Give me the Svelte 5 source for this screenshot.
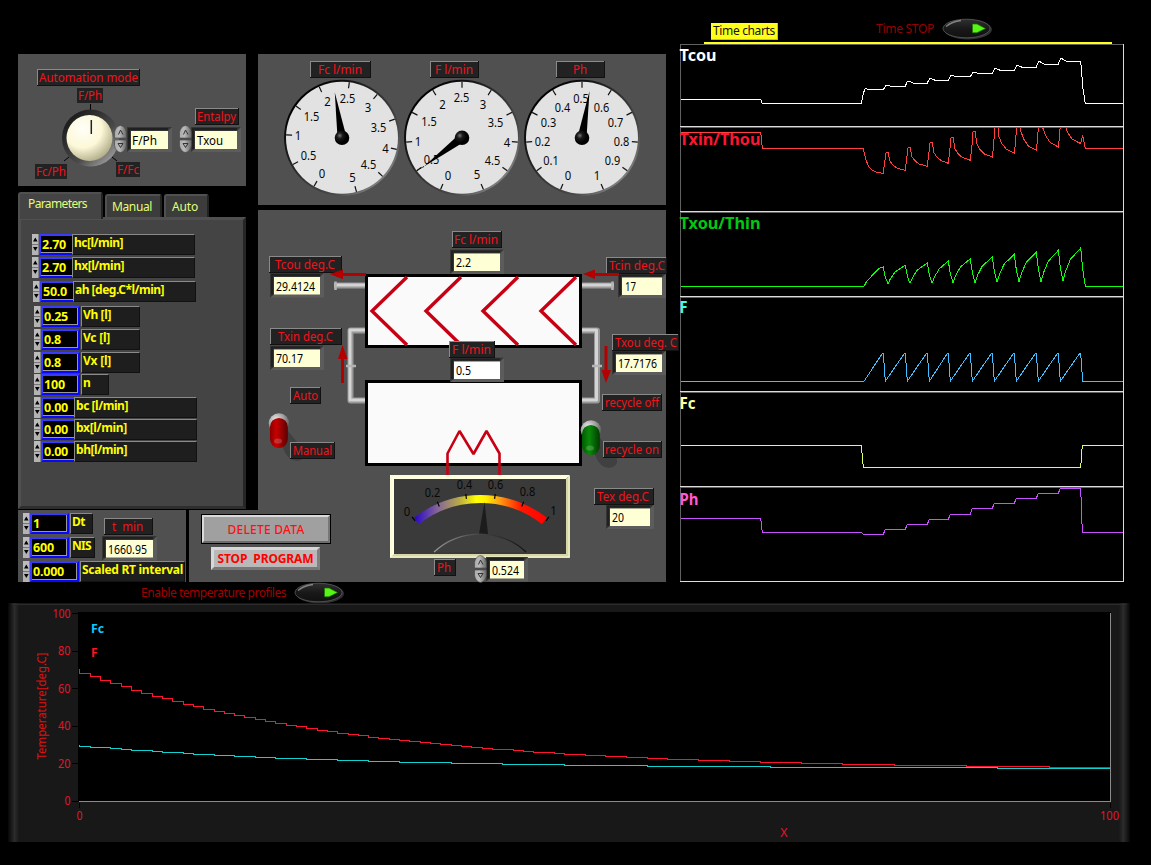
<script>
  function fit(node, width) {
    const natural = node.getBoundingClientRect().width;
    node.style.letterSpacing = `${(width - natural) / node.textContent.length}px`;
  }

  const params = [
    { v: '2.70', vw: 24, l: 'hc[l/min]', lw: 49, x: 0, box: 33, w: 123, gap: 0, join: true },
    { v: '2.70', vw: 24, l: 'hx[l/min]', lw: 50, x: 0, box: 33, w: 123, gap: 2, join: true },
    { v: '50.0', vw: 24, l: 'ah [deg.C*l/min]', lw: 89, x: 1, box: 33, w: 123, gap: 3, join: true },
    { v: '0.25', vw: 24, l: 'Vh [l]', lw: 28, x: 2, box: 39, w: 59, gap: 4 },
    { v: '0.8', vw: 17, l: 'Vc [l]', lw: 27, x: 2, box: 39, w: 59, gap: 2 },
    { v: '0.8', vw: 17, l: 'Vx [l]', lw: 28, x: 2, box: 39, w: 59, gap: 2 },
    { v: '100', vw: 21, l: 'n', lw: 7, x: 2, box: 39, w: 28, gap: 1 },
    { v: '0.00', vw: 24, l: 'bc [l/min]', lw: 52, x: 2, box: 33, w: 123, gap: 2, join: true },
    { v: '0.00', vw: 24, l: 'bx[l/min]', lw: 51, x: 2, box: 33, w: 123, gap: 1, join: true },
    { v: '0.00', vw: 24, l: 'bh[l/min]', lw: 51, x: 2, box: 33, w: 123, gap: 1, join: true }
  ];
  const settings = [
    { v: '1', vw: 7, l: 'Dt', lw: 13, box: 39, w: 23, x: 0, gap: 0 },
    { v: '600', vw: 21, l: 'NIS', lw: 19, box: 39, w: 25, x: 0, gap: 3 },
    { v: '0.000', vw: 31, l: 'Scaled RT interval', lw: 101, box: 49, w: 105, x: 0, gap: 3 }
  ];

  const scale5 = ['0', '0.5', '1', '1.5', '2', '2.5', '3', '3.5', '4', '4.5', '5'];
  const scale1 = ['0', '0.1', '0.2', '0.3', '0.4', '0.5', '0.6', '0.7', '0.8', '0.9', '1'];
  const gauges = [
    { cx: 342, start: 30, tip: [334.8, 92.5], names: scale5,
      at: [[322,173],[308.5,155.5],[298,135.5],[311.5,116.5],[327.5,101.5],[347.5,98.5],[368,107.5],[378.5,127],[385.5,148],[368.5,164],[352.5,177]] },
    { cx: 462, start: 22.5, tip: [424, 166.5], names: scale5,
      at: [[448,175],[431.5,159.5],[418,141.5],[429,121.5],[442.5,104.5],[461.5,97.5],[483,104.5],[495.5,122],[507,142],[492.5,160],[477,174.5]] },
    { cx: 582, start: 22.5, tip: [589.5, 91], names: scale1,
      at: [[568,175],[551,160],[542.5,141],[548.5,122],[562.5,107],[581,98],[601.5,107],[615.5,122],[621.5,141],[612.5,160],[597,175]] }
  ];
  const gy = 137.8;
  const ticks = (g) =>
    g.names.map((_, i) => {
      const a = ((g.start + i * 31.5) * Math.PI) / 180;
      const s = Math.sin(a), c = Math.cos(a);
      return [g.cx - s * 56, gy + c * 56, g.cx - s * 50, gy + c * 50];
    });
  const needle = (g, h = 4.5) => {
    const dx = g.tip[0] - g.cx, dy = g.tip[1] - gy, d = Math.hypot(dx, dy);
    const nx = (-dy / d) * h, ny = (dx / d) * h;
    return `${g.tip[0]},${g.tip[1]} ${g.cx + nx},${gy + ny} ${g.cx - nx},${gy - ny}`;
  };

  const mR = 104, mCx = 480.5, mCy = 603;
  const meterTicks = [0, 1, 2, 3, 4, 5].map((i) => {
    const a = ((-38.5 + i * 15.4) * Math.PI) / 180;
    const s = Math.sin(a), c = Math.cos(a);
    return [mCx + s * (mR + 6), mCy - c * (mR + 6), mCx + s * (mR + 1), mCy - c * (mR + 1)];
  });

  // Strip-chart traces: samples are in thirds of a pixel from the chart origin.
  const J = [625, 691, 757, 820, 886, 952, 1018, 1084, 1150, 1217];
  const path = (pts, oy) =>
    'M' + pts.map(([x, y]) => `${(675 + x / 3).toFixed(1)} ${(oy + y / 3).toFixed(1)}`).join('L');

  const lvl = [239, 229, 219, 211, 200, 190, 181, 172, 163, 154];
  const pk = [235, 226, 213, 205, 196, 187, 175, 166, 154, 145];
  const tcou = [[18,268],[257,268],[262,280],[559,280],[565,250],[571,235],[580,lvl[0]]];
  for (let i = 0; i < 9; i++)
    tcou.push([J[i], lvl[i]], [J[i] + 5, pk[i + 1] + 4], [J[i] + 9, pk[i + 1]], [J[i] + 24, lvl[i + 1]]);
  tcou.push([1217,154],[1224,238],[1231,280],[1344,280]);

  const low = [490, 481, 469, 460, 451, 441, 430, 421, 411, 401];
  const top = [0, 427, 411, 396, 381, 364, 330, 310, 300, 290];
  const txin = [[18,367],[257,367],[262,415],[564,415],[573,450],[581,470],[592,481],[605,487],[625,490]];
  for (let i = 0; i < 9; i++) {
    const p = top[i + 1], b = low[i + 1], d = b - p;
    txin.push([J[i], low[i]], [J[i] + 4, low[i] - 35], [J[i] + 8, p + 2], [J[i] + 14, p],
      [J[i] + 20, p + d * 0.5], [J[i] + 28, p + d * 0.7], [J[i] + 42, p + d * 0.88], [J[i + 1], b]);
  }
  txin.push([1217,401],[1223,376],[1231,415],[1344,415]);

  const gp = [771, 766, 759, 753, 746, 741, 733, 726, 721, 714];
  const gt = [821, 820, 820, 818, 818, 815, 815, 815, 812];
  const txou = [[18,829],[567,829],[575,814],[612,775],[625,771]];
  for (let i = 0; i < 9; i++) {
    const d = gt[i] - gp[i + 1];
    txou.push([J[i], gp[i]], [J[i] + 6, (gp[i] + gt[i]) / 2 + 5], [J[i] + 14, gt[i]],
      [J[i] + 22, gt[i] - d * 0.3], [J[i] + 36, gt[i] - d * 0.65], [J[i + 1], gp[i + 1]]);
  }
  txou.push([1217,714],[1223,778],[1231,829],[1344,829]);

  const flow = [[18,274],[567,274]];
  J.forEach((x) => flow.push([x - 4, 192], [x, 190], [x + 6, 274]));
  flow.push([1344, 274]);
  const fc = [[18,466],[559,466],[565,532],[1217,532],[1222,466],[1344,466]];
  const phl = [733, 718, 703, 688, 673, 655, 640, 625, 610, 595];
  const ph = [[18,685],[257,685],[262,727],[560,727],[565,733]];
  for (let i = 0; i < 9; i++) ph.push([J[i], phl[i]], [J[i] + 6, phl[i + 1]]);
  ph.push([1217,595],[1222,727],[1344,727]);

  const traces = [
    { d: path(tcou, 10), c: '#ffffff' },
    { d: path(txin, 10), c: '#ff4040' },
    { d: path(txou, 10), c: '#10ff10' },
    { d: path(flow, 290), c: '#40c0ff' },
    { d: path(fc, 290), c: '#dcff60' },
    { d: path(ph, 290), c: '#c850ff' }
  ];
  const names = [
    ['Tcou', 61, 37, '#ffffff'], ['Txin/Thou', 145, 81, '#ff1530'], ['Txou/Thin', 229, 81, '#00c814'],
    ['F', 313, 8, '#3cffee'], ['Fc', 409, 16, '#ffffa0'], ['Ph', 505, 19, '#ff5ad0']
  ];

  const profile = (base, amp, y0) => {
    let d = `M79.5 ${y0}`;
    for (let n = 0; n < 100; n++) {
      const y = Math.round(base - amp * Math.exp(-0.039 * n)) + 0.5;
      d += `V${y}H${Math.min(1110, Math.round(79.5 + (n + 1) * 10.31) + 0.5)}`;
    }
    return d;
  };
  const hot = profile(769, 96.5, 669);
  const cold = profile(768.2, 22.4, 745);
</script>

{#snippet txt(x, y, s, w, c = '#f0141e')}
  <text {x} {y} fill={c} textLength={w} lengthAdjust="spacingAndGlyphs">{s}</text>
{/snippet}

{#snippet tag(x, y, w, h, s, tx, tw)}
  <rect {x} {y} width={w} height={h} fill="#111" />
  <rect {x} {y} width={w - 1} height={h - 1} fill="#8a8a8a" />
  <rect x={x + 1} y={y + 1} width={w - 2} height={h - 2} fill="#222" />
  {@render txt(tx, y + 13, s, tw)}
{/snippet}

{#snippet field(x, y, w, h, s, tx, tw, bg = '#ffffd6')}
  <rect x={x - 4} y={y - 4} width={w + 8} height={h + 7} fill="#5c5c5c" />
  <path d="M{x - 4} {y + h + 3}V{y - 4}H{x + w + 4}L{x + w} {y}H{x}V{y + h}Z" fill="#353535" />
  <path d="M{x - 2} {y + h}V{y - 2}H{x + w}" fill="none" stroke="#202020" stroke-width="2" />
  <rect {x} {y} width={w} height={h} fill={bg} />
  {@render txt(tx, Math.round(y + 13.5), s, tw, '#000')}
{/snippet}

{#snippet spin(x, y)}
  <path d="M{x} {y + 12.5}V{y + 7}Q{x + 1} {y + 1} {x + 6} {y}Q{x + 11} {y + 1} {x + 12} {y + 7}V{y + 12.5}Z" fill="url(#nub)" stroke="#444" stroke-width=".6" />
  <path d="M{x} {y + 14.5}V{y + 20}Q{x + 1} {y + 26} {x + 6} {y + 27}Q{x + 11} {y + 26} {x + 12} {y + 20}V{y + 14.5}Z" fill="url(#nub)" stroke="#444" stroke-width=".6" />
  <path d="M{x + 4} {y + 9}L{x + 6} {y + 4.5}L{x + 8.5} {y + 9}" fill="none" stroke="#333" />
  <path d="M{x + 3.5} {y + 18}H{x + 8.5}L{x + 6} {y + 22}Z" fill="none" stroke="#333" />
{/snippet}

{#snippet lamp()}
  <svg class="lamp" width="52" height="22" viewBox="0 0 52 22">
    <ellipse cx="26" cy="11.5" rx="24" ry="10" fill="#2e2e2e" />
    <ellipse cx="24.5" cy="10.5" rx="23.5" ry="9.3" fill="url(#pill)" stroke="#5c5c5c" stroke-width=".8" />
    <path d="M4 8.5Q10 3.5 19 2.5" fill="none" stroke="#aaa" stroke-width="1.4" opacity=".7" />
    <path d="M30.5 6H35L43.5 10.5L35 14.8H30.5Z" fill="#55f516" stroke="#247008" stroke-width=".7" />
  </svg>
{/snippet}

{#snippet toggle(x, y, fill)}
  <path d="M{x + 5} {y + 4}L{x + 26} {y + 30}Q{x + 27} {y + 38} {x + 18} {y + 39}Q{x + 9} {y + 39} {x + 4} {y + 26}Z" fill="#3b3b3b" opacity=".75" />
  <circle cx={x} cy={y + 1.5} r="10.3" fill="url(#chrome)" />
  <rect x={x - 9} y={y - 4} width="17.8" height="30" rx="8.9" {fill} />
  <ellipse cx={x - 1} cy={y + 19} rx="4" ry="2.6" fill="#fff" opacity=".18" />
{/snippet}

{#snippet numeric(p)}
  <div class="row" style:margin-top="{p.gap}px" style:margin-left="{p.x}px">
    <svg class="inc" width="7" height="21" viewBox="0 0 7 21">
      <rect width="7" height="21" fill="#777" /><rect width="6.2" height="10" fill="#bbb" /><rect y="11" width="6.2" height="10" fill="#b3b3b3" />
      <path d="M1 7.5L3.3 3.5L5.6 7.5Z M1 13L3.3 17L5.6 13Z" fill="#000" />
    </svg>
    <div class="num" class:join={p.join} style:width="{p.box}px"><span use:fit={p.vw}>{p.v}</span></div>
    <div class="cap" class:join={p.join} style:width="{p.w}px"><span use:fit={p.lw}>{p.l}</span></div>
  </div>
{/snippet}

<div class="page">
  <div class="top">
    <div class="bench">
      <div class="left">
        <svg class="panel" width="228" height="132" viewBox="18 54 228 132">
          <defs>
            <linearGradient id="nub" x1="0" x2="1"><stop offset="0" stop-color="#aaa" /><stop offset=".4" stop-color="#bbb" /><stop offset="1" stop-color="#666" /></linearGradient>
            <linearGradient id="ring" x1="0" y1="0" x2="1" y2="1"><stop offset=".1" stop-color="#181818" /><stop offset=".6" stop-color="#4a4a4a" /><stop offset=".87" stop-color="#999" /><stop offset="1" stop-color="#555" /></linearGradient>
            <radialGradient id="cream" cx=".35" cy=".3" r=".75"><stop offset="0" stop-color="#fffff8" /><stop offset=".55" stop-color="#fcf8d8" /><stop offset="1" stop-color="#b0ac88" /></radialGradient>
            <linearGradient id="pill" x1="0" y1="0" x2="0" y2="1"><stop offset="0" stop-color="#303030" /><stop offset=".5" stop-color="#191919" /><stop offset="1" stop-color="#101010" /></linearGradient>
          </defs>
          {@render tag(37, 69, 103, 17, 'Automation mode', 39, 99)}
          <rect x="77" y="88" width="26" height="15" fill="#222" />{@render txt(78, 100, 'F/Ph', 24)}
          <rect x="35" y="164" width="32" height="15" fill="#222" />{@render txt(36, 176, 'Fc/Ph', 30)}
          <rect x="116" y="162" width="24" height="15" fill="#222" />{@render txt(117, 174, 'F/Fc', 22)}
          <path d="M90.5 104V110M69 157L64 161M112 157L117 161" stroke="#000" fill="none" />
          <circle cx="90.5" cy="138" r="28.5" fill="url(#ring)" />
          <circle cx="89.5" cy="138" r="23" fill="url(#cream)" />
          <path d="M91.3 120V134" stroke="#222" stroke-width="1.5" />
          {@render field(131, 131, 37, 18, 'F/Ph', 132, 25)}
          {@render spin(114.5, 125.5)}
          {@render tag(195, 108, 44, 17, 'Entalpy', 197, 39)}
          {@render field(195, 131, 42, 18, 'Txou', 197, 26)}
          {@render spin(179.5, 125.5)}
        </svg>

        <div class="tabs">
          <div class="tabrow">
            <div class="tab on"><span use:fit={59}>Parameters</span></div>
            <div class="tab manual"><span use:fit={40}>Manual</span></div>
            <div class="tab auto"><span use:fit={26}>Auto</span></div>
          </div>
          <div class="sheet">
            {#each params as p}{@render numeric(p)}{/each}
          </div>
        </div>
      </div>

      <div class="right">
        <svg class="panel" width="408" height="151" viewBox="258 54 408 151">
          <defs>
            <linearGradient id="bezel" x1="0" y1="0" x2="1" y2="1"><stop offset=".15" stop-color="#000" /><stop offset=".5" stop-color="#333" /><stop offset=".72" stop-color="#4a4a4a" /><stop offset=".88" stop-color="#8a8a8a" /></linearGradient>
            <radialGradient id="hub" cx=".35" cy=".35"><stop offset="0" stop-color="#777" /><stop offset=".4" stop-color="#1a1a1a" /><stop offset="1" stop-color="#000" /></radialGradient>
          </defs>
          {@render tag(310, 61, 61, 17, 'Fc l/min', 318, 44)}
          {@render tag(430, 61, 49, 17, 'F l/min', 435, 38)}
          {@render tag(556, 61, 49, 17, 'Ph', 573, 14)}
          {#each gauges as g}
            <circle cx={g.cx} cy={gy} r="58" fill="url(#bezel)" />
            <circle cx={g.cx} cy={gy} r="56" fill="#e2e2e2" />
            {#each ticks(g) as t}<line x1={t[0]} y1={t[1]} x2={t[2]} y2={t[3]} stroke="#111" stroke-width="1.2" />{/each}
            {#each g.names as n, i}
              <text x={g.at[i][0]} y={g.at[i][1] + 4.5} text-anchor="middle" class="dial" textLength={n.length > 1 ? 15.5 : 6.5} lengthAdjust="spacingAndGlyphs">{n}</text>
            {/each}
            <polygon points={needle(g)} fill="#000" />
            <circle cx={g.cx} cy={gy} r="7.3" fill="url(#hub)" />
          {/each}
          <path d="M424 166.5L416 171" stroke="#111" stroke-dasharray="2 1" />
        </svg>

        <svg class="panel process" width="408" height="372" viewBox="258 210 408 372">
          <defs>
            <linearGradient id="heat" gradientUnits="userSpaceOnUse" x1="413" x2="548" y1="0" y2="0">
              <stop offset="0" stop-color="#2400c8" /><stop offset=".18" stop-color="#84649a" /><stop offset=".34" stop-color="#b8a848" /><stop offset=".47" stop-color="#ffff00" /><stop offset=".54" stop-color="#fff000" /><stop offset=".64" stop-color="#ffa010" /><stop offset=".8" stop-color="#ff1800" /><stop offset="1" stop-color="#ff0000" />
            </linearGradient>
            <linearGradient id="rim" x1="0" x2="1"><stop offset="0" stop-color="#999" /><stop offset=".5" stop-color="#444" /><stop offset="1" stop-color="#111" /></linearGradient>
            <linearGradient id="red" x1="0" x2="1"><stop offset="0" stop-color="#8c0000" /><stop offset=".35" stop-color="#c80000" /><stop offset="1" stop-color="#5a0000" /></linearGradient>
            <linearGradient id="green" x1="0" x2="1"><stop offset="0" stop-color="#005c00" /><stop offset=".4" stop-color="#0a8a0a" /><stop offset="1" stop-color="#003c00" /></linearGradient>
            <radialGradient id="chrome" cx=".35" cy=".3" r=".7"><stop offset="0" stop-color="#e8e8e8" /><stop offset=".6" stop-color="#999" /><stop offset="1" stop-color="#555" /></radialGradient>
          </defs>

          <g fill="none" stroke-linejoin="round">
            <path d="M334 285.5H366M582 285.5H614M366 330.5H350.5V400.5H366M582 330.5H597V400.5H582" stroke="#989898" stroke-width="6" />
            <path d="M334 285H366M582 285H614M366 330H350V400H366M582 330H596.5V400H582" stroke="#d4d4d4" stroke-width="3" />
            <path d="M335.5 281.5V290M612.5 281.5V290M346 366H356M592 366H602" stroke="#b4b4b4" stroke-width="2.5" />
          </g>

          <rect x="366.5" y="275.5" width="214" height="71" fill="#fafafa" stroke="#000" stroke-width="3" />
          <rect x="366.5" y="381.5" width="214" height="83" fill="#fafafa" stroke="#000" stroke-width="3" />
          <path d="M407 277L372 311L407 345M461 277L426 311L461 345M518 277L483 311L518 345M576 277L541 311L576 345" fill="none" stroke="#c80014" stroke-width="3.4" />
          <path d="M447.5 475V453.5L459.5 431L473.5 454L486.5 431L499.5 453.5V475" fill="none" stroke="#c80014" stroke-width="2.6" stroke-linejoin="bevel" />

          <g fill="#b40000">
            <path d="M330 274L343 269.5V273H366V276H343V279Z" />
            <path d="M583 274L595 269.5V273H619V276H595V279Z" />
            <path d="M342.5 345L338 359H341V383H344V359H347.5Z" />
            <path d="M606 383L601.5 370H604.5V346H607.5V370H611Z" />
          </g>

          {@render tag(452, 231, 50, 17, 'Fc l/min', 454, 44)}
          {@render field(454, 253.5, 46, 17.5, '2.2', 456, 15)}
          {@render field(274, 277, 46, 17.5, '29.4124', 276, 39)}
          {@render tag(269, 256, 73, 17, 'Tcou deg.C', 275, 60)}
          {@render field(274, 349.5, 46, 17.5, '70.17', 276, 27)}
          {@render tag(270, 328, 72, 17, 'Txin deg.C', 278, 55)}
          {@render field(454, 361.5, 46, 17.5, '0.5', 456, 15, '#ffffff')}
          {@render tag(449, 341, 46, 17, 'F l/min', 452, 39)}
          {@render field(622, 277.5, 40, 17.5, '17', 625, 11)}
          {@render tag(606, 257, 61, 17, 'Tcin deg.C', 609, 56)}
          <path d="M330 274L343 269.5V279ZM595 273H619V276H595Z" fill="#b40000" />
          {@render field(616, 354.5, 46, 17.5, '17.7176', 618, 39)}
          {@render tag(612, 334, 67, 17, 'Txou deg. C', 615, 62)}

          {@render toggle(279, 422, 'url(#red)')}
          {@render tag(290, 387, 31, 17, 'Auto', 293, 25)}
          {@render tag(290, 442, 45, 17, 'Manual', 293, 39)}
          {@render toggle(591, 429, 'url(#green)')}
          {@render tag(602, 394, 60, 17, 'recycle off', 605, 54)}
          {@render tag(603, 441, 59, 17, 'recycle on', 605, 54)}

          {@render field(610, 508.5, 40, 17.5, '20', 612, 12)}
          {@render tag(594, 488, 60, 17, 'Tex deg.C', 597, 52)}

          <path d="M390 475H570L566 479V554L570 558H390Z" fill="#ffffe4" />
          <path d="M570 475V558H390L394 554H566V479Z" fill="#d6d6a6" />
          <path d="M391 476H569V557H391Z" fill="none" stroke="#fafad4" />
          <rect x="394" y="479" width="172" height="75" fill="#3a3a3a" />
          <path d="M416.5 521A104 104 0 0 1 544.5 521" fill="none" stroke="url(#heat)" stroke-width="8" />
          {#each meterTicks as t}<line x1={t[0]} y1={t[1]} x2={t[2]} y2={t[3]} stroke="#000" stroke-width="1.2" />{/each}
          {#each [['0', 407, 511], ['0.2', 432.5, 492], ['0.4', 464.5, 484], ['0.6', 495.5, 484], ['0.8', 527.5, 491.5], ['1', 553.5, 510.5]] as m}
            <text x={m[1]} y={m[2] + 4.5} text-anchor="middle" class="dial" textLength={m[0].length > 1 ? 15.5 : 6.5} lengthAdjust="spacingAndGlyphs">{m[0]}</text>
          {/each}
          <path d="M484.5 502L479 534H488Z" fill="#1c1c1c" />
          <path d="M434 552A68 68 0 0 1 526 552" fill="#3f3f3f" stroke="url(#rim)" stroke-width="1.2" />

          {@render tag(434, 559, 22, 17, 'Ph', 437, 14)}
          {@render field(490, 561, 34, 17.5, '0.524', 492, 27)}
          {@render spin(474.5, 555.5)}
        </svg>
      </div>

      <div class="settings">
        <div>
          {#each settings as p}{@render numeric(p)}{/each}
        </div>
        <svg class="clock" width="60" height="46" viewBox="100 516 60 46">
          {@render tag(104, 518, 49, 17, 't  min', 112, 31)}
          {@render field(106, 540, 47, 17.5, '1660.95', 108, 39)}
        </svg>
      </div>

      <div class="actions">
        <button class="delete"><span use:fit={77}>DELETE DATA</span></button>
        <button class="stop"><span use:fit={96}>STOP&nbsp; PROGRAM</span></button>
      </div>
    </div>

    <div class="charts">
      <div class="chead">
        <div class="ctab"><span use:fit={62}>Time charts</span></div>
        <div class="tstop"><span use:fit={58}>Time STOP</span>{@render lamp()}</div>
      </div>
      <svg class="strip" width="444" height="540" viewBox="680 42 444 540">
        <path d="M704 42H1112V44H704Z" fill="#ffff20" />
        <g shape-rendering="crispEdges">
          <path d="M680.5 581V44.5H1123M680 127.5H1123M680 212.5H1123M680 297.5H1123M680 392.5H1123M680 487.5H1123" fill="none" stroke="#606060" />
          <path d="M1123.5 44V581.5H680M680 126.5H1123M680 211.5H1123M680 296.5H1123M680 391.5H1123M680 486.5H1123" fill="none" stroke="#dcdcdc" />
        </g>
        <clipPath id="lane"><rect x="681" y="128" width="442" height="83" /></clipPath>
        {#each traces as t, i}
          <path d={t.d} fill="none" stroke={t.c} stroke-width="1" shape-rendering="crispEdges" clip-path={i === 1 ? 'url(#lane)' : undefined} />
        {/each}
        {#each names as n}
          <text x="679.5" y={n[1]} class="lane" fill={n[3]} textLength={n[2]} lengthAdjust="spacingAndGlyphs">{n[0]}</text>
        {/each}
      </svg>
    </div>
  </div>

  <div class="enable"><span use:fit={145}>Enable temperature profiles</span>{@render lamp()}</div>

  <svg class="graph" width="1122" height="239" viewBox="8 603 1122 239">
    <defs>
      <linearGradient id="edge"><stop offset="0" stop-color="#060606" /><stop offset=".6" stop-color="#2c2c2c" /><stop offset="1" stop-color="#181818" /></linearGradient>
    </defs>
    <rect x="8" y="603" width="1122" height="239" fill="#181818" />
    <rect x="8" y="603" width="11" height="239" fill="url(#edge)" />
    <rect x="1119" y="603" width="11" height="239" fill="url(#edge)" transform="rotate(180 1124.5 722.5)" />
    <path d="M12 604.5H1127" stroke="#2c2c2c" />
    <rect x="78" y="612" width="1033" height="190" fill="#000" />
    <path d="M79 801.5H1110.5V613" fill="none" stroke="#8a8a8a" shape-rendering="crispEdges" />
    {#each [100, 80, 60, 40, 20, 0] as v, i}
      <path d="M72 {Math.round(613 + i * 37.5) + 0.5}H78" stroke="#000" />
      <text x="70.5" y={618 + i * 37.4} text-anchor="end" class="axis" textLength={v === 100 ? 18 : v === 0 ? 6 : 12.5} lengthAdjust="spacingAndGlyphs">{v}</text>
    {/each}
    <path d="M79.5 803V808M1110.5 803V808" stroke="#000" />
    <text x="79.5" y="820" text-anchor="middle" class="axis" textLength="6" lengthAdjust="spacingAndGlyphs">0</text>
    <text x="1109.5" y="820" text-anchor="middle" class="axis" textLength="19" lengthAdjust="spacingAndGlyphs">100</text>
    <text x="784" y="837" text-anchor="middle" class="axis">X</text>
    <text transform="translate(45.5 706) rotate(-90)" text-anchor="middle" fill="#e01010" textLength="107" lengthAdjust="spacingAndGlyphs">Temperature[deg.C]</text>
    <text x="91" y="633" class="key" fill="#10c8ff" textLength="13" lengthAdjust="spacingAndGlyphs">Fc</text>
    <text x="91" y="657" class="key" fill="#ff1420">F</text>
    <path d={hot} fill="none" stroke="#ff1430" shape-rendering="crispEdges" />
    <path d={cold} fill="none" stroke="#10d0d0" shape-rendering="crispEdges" />
  </svg>
</div>

<style>
  :global(body) { background: #000; overflow: hidden; }
  .page { width: 1151px; height: 865px; background: #000; overflow: hidden; font: 12px/16px 'Noto Sans', 'Open Sans', sans-serif; color: #e8141e; }
  svg { display: block; flex: none; }
  text { font: 12.4px 'Noto Sans', 'Open Sans', sans-serif; white-space: pre; }
  span { display: inline-block; white-space: pre; }
  .top { display: flex; height: 582px; }
  .bench { display: grid; grid-template-columns: 168px 3px 69px 408px; grid-template-rows: 456px 72px; margin: 54px 0 0 18px; }
  .panel { background: #505050; }
  .left { grid-column: 1 / 4; grid-row: 1; display: flex; flex-direction: column; gap: 6px; }
  .right { grid-column: 4; grid-row: 1 / 3; display: flex; flex-direction: column; gap: 5px; }
  .process { overflow: visible; position: relative; }
  .dial { fill: #080808; }

  .tabs { width: 228px; height: 317px; display: flex; flex-direction: column; }
  .tabrow { display: flex; align-items: flex-end; height: 25px; gap: 2px; }
  .tab { box-sizing: border-box; height: 23px; background: #3c3c3c; color: #e0ff78; border-top: 2px solid #505050; border-left: 2px solid #505050; border-right: 2px solid #222; border-radius: 3px 3px 0 0; }
  .tab.on { width: 85px; height: 27px; margin-bottom: -2px; background: #444; padding: 2px 0 0 8px; z-index: 1; }
  .tab.manual { width: 57px; padding: 3px 0 0 5px; }
  .tab.auto { width: 45px; padding: 3px 0 0 6px; }
  .sheet { flex: 1; box-sizing: border-box; background: #444; border: 3px solid; border-color: #505050 #262626 #2e2e2e #505050; padding: 14px 0 0 11px; }
  .row { display: flex; height: 21px; font-weight: 700; color: #ffff00; }
  .num, .cap { box-sizing: border-box; height: 21px; white-space: nowrap; flex: none; }
  .num { background: #000; border: 2px solid #0808ff; border-top-color: #3a3aff; border-left-color: #3a3aff; padding: 0 0 0 1px; font-size: 12.5px; line-height: 17px; box-shadow: inset -1px -1px #999; margin-right: 1px; }
  .num span { line-height: 17px; }
  .num.join { border-right: 0; margin-right: 0; box-shadow: inset 0 -1px #999; }
  .cap { background: #1e1e1e; border: 1px solid; border-color: #8a8a8a #111 #111 #8a8a8a; padding-left: 1px; line-height: 16px; font-size: 12px; }
  .cap span { line-height: 16px; }

  .settings { grid-column: 1; grid-row: 2; display: flex; background: #505050; padding: 3px 0 0 5px; overflow: hidden; }
  .settings > div { width: 77px; }
  .clock { margin-top: 3px; }
  .settings > div .row { width: 163px; }
  .actions { grid-column: 3 / 5; grid-row: 2; justify-self: start; width: 152px; box-sizing: border-box; position: relative; background: #505050; padding: 4px 0 0 12px; display: flex; flex-direction: column; align-items: flex-start; gap: 3px; }
  button { box-sizing: border-box; padding: 0; color: #ff1010; font: 12px/16px 'Noto Sans', 'Open Sans', sans-serif; }
  .delete { width: 130px; height: 30px; padding-top: 1px; background: #a0a0a0; border: 3px solid; border-color: #dadada #777 #6c6c6c #dadada; outline: 1px solid #000; outline-offset: -1px; font-weight: 500; }
  .stop { width: 109px; height: 23px; margin-left: 10px; background: #b9b9b9; border: 3px solid; border-color: #d8d8d8 #808080 #777 #d8d8d8; font-weight: 700; color: #ff0000; }

  .charts { width: 444px; margin-left: 14px; }
  .chead { display: flex; height: 42px; }
  .ctab { box-sizing: border-box; width: 67px; height: 17px; margin: 23px 0 0 31px; padding-left: 2px; background: #ffff18; color: #111; border: solid #c8c800; border-width: 0 1px 1px 0; }
  .tstop { display: flex; align-items: center; height: 22px; margin: 18px 0 0 98px; gap: 8px; color: #980000; }
  .strip { overflow: visible; }
  .lane { font-weight: 700; font-size: 16px; }
  .enable { display: flex; align-items: center; height: 21px; padding-left: 141px; gap: 8px; color: #a40000; }
  .graph { margin-left: 8px; }
  .axis { fill: #e81428; }
  .key { font-weight: 700; font-size: 12px; }
</style>
